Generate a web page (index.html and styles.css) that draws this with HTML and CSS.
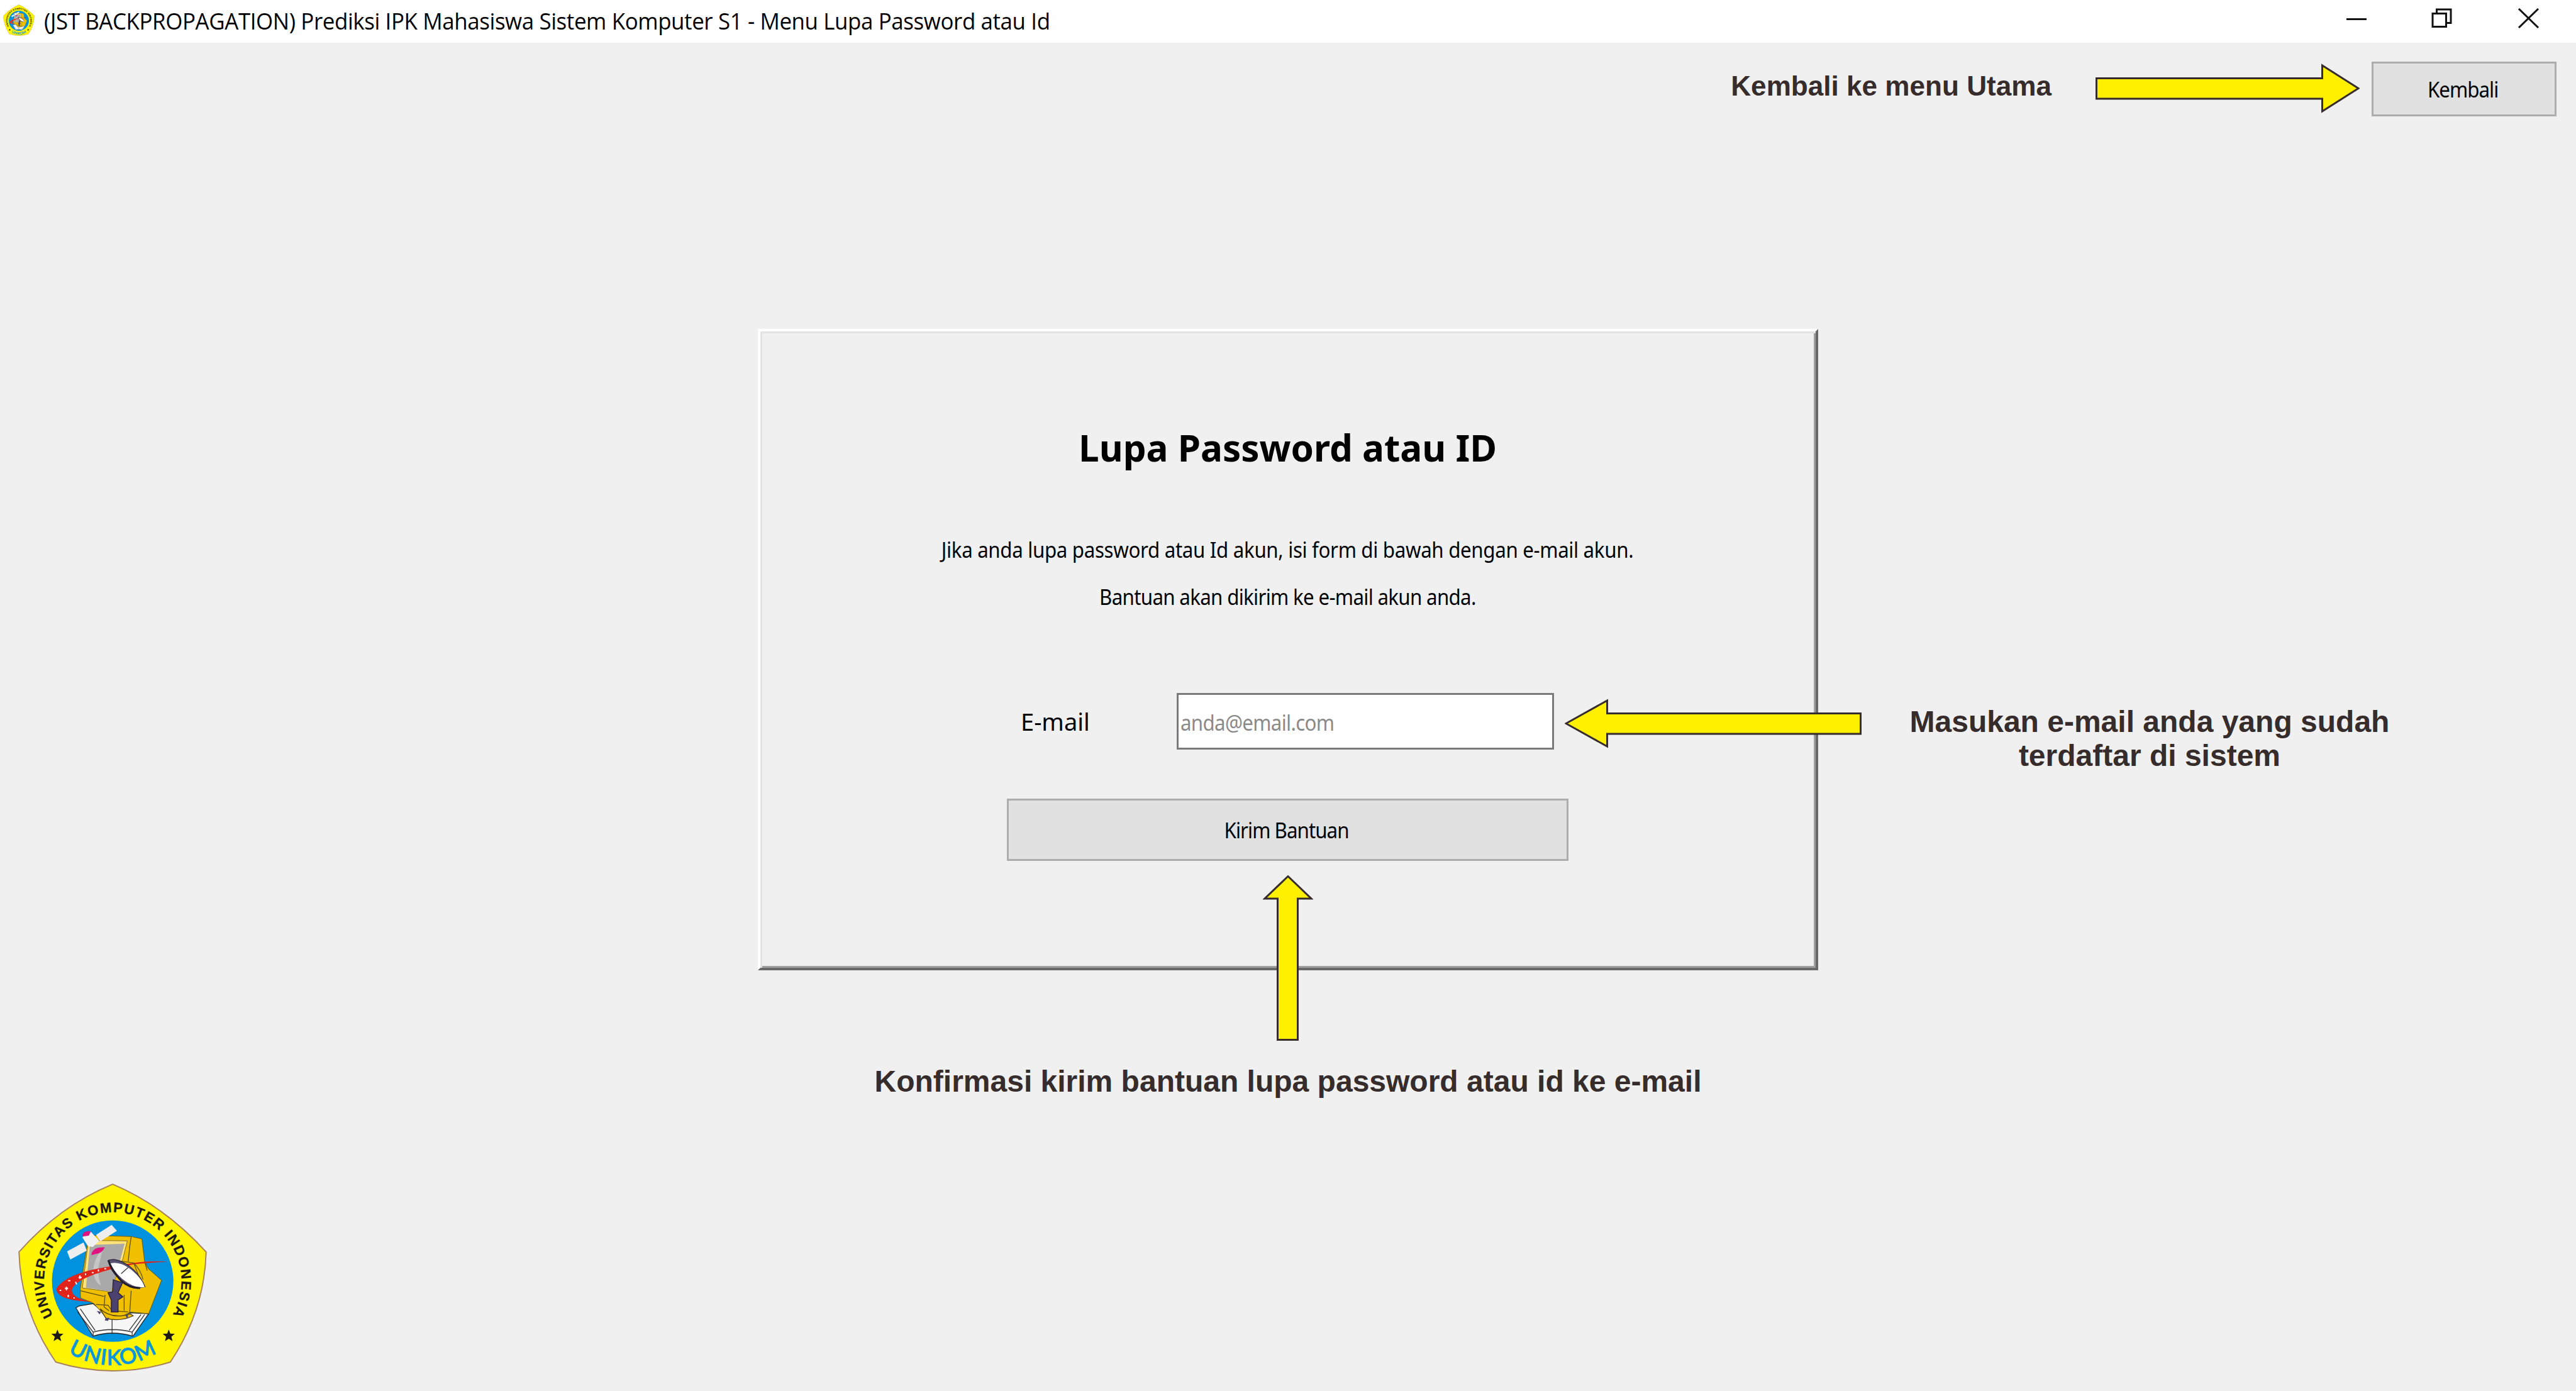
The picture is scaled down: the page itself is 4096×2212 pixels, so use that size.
FILE: index.html
```html
<!DOCTYPE html>
<html lang="id">
<head>
<meta charset="utf-8">
<title>Menu Lupa Password atau Id</title>
<link rel="stylesheet" href="styles.css">
</head>
<body>
<svg class="defs" width="0" height="0" aria-hidden="true">
  <symbol id="logo" viewBox="90 60 945 945">
    <path d="M563 70Q820 178 1028 407Q1020 700 850 955Q563 1042 280 955Q105 700 97 407Q300 178 563 70Z" fill="#fff500" stroke="#a8805c" stroke-width="6"/>
    <circle cx="563" cy="552" r="302" fill="#0092df"/>
    <path d="M380 685L395 676L465 664L560 740L650 710L742 714L664 826Q560 796 465 826Z" fill="#f6f6f6" stroke="#222" stroke-width="4"/>
    <path d="M388 705L466 806Q560 780 660 806L722 718M466 806V826M660 806V826M560 735V816M402 690L476 798M704 718L645 797" fill="none" stroke="#333" stroke-width="4"/>
    <path d="M470 325L655 330L708 342L722 455L740 490L806 548L742 714L650 706L590 740L520 722L470 664L403 636L402 590L440 345Z" fill="#efbf00" stroke="#6b5a14" stroke-width="3"/>
    <path d="M441 362L490 350L636 352L614 440L550 605L412 586Z" fill="#ffe27a" stroke="#7a6b2a" stroke-width="3"/>
    <path d="M450 372L622 366L600 450L556 605L430 584Z" fill="#a9a9a9"/>
    <path d="M515 385Q470 440 466 500Q468 550 505 575Q480 500 500 450Z" fill="#c6c6c6"/>
    <path d="M655 332L648 380L640 455M722 455L735 500M655 600L648 706M525 620L520 680L545 700M403 600L520 628M620 620V700M480 668L540 672L560 700L640 705" fill="none" stroke="#5c4c10" stroke-width="4"/>
    <path d="M838 456Q740 448 640 466L560 478Q330 510 283 590Q285 650 465 655Q360 640 360 596Q375 540 560 492L660 470Q740 460 838 456Z" fill="#e0241c"/>
    <path d="M325 588H341M333 580V598M299 598H307M338 626H346M342 620V632M368 636H374M341 550H353M378 556L384 568M400 524V540M393 534H409M428 514V522M460 510H468M492 494V504M522 490H530" stroke="#fff" stroke-width="6" fill="none"/>
    <path d="M336 404L418 360L434 400L352 445Z" fill="#eee"/>
    <path d="M480 322L558 272L584 302L502 354Z" fill="#eee"/>
    <path d="M412 334L454 306L496 352L464 382L440 378Z" fill="#f1f1f1"/>
    <path d="M412 330Q412 300 455 304L444 326Z" fill="#e0127f"/>
    <path d="M457 423Q460 380 524 384Q508 416 482 416Z" fill="#e0127f"/>
    <path d="M566 545L612 560L590 610L614 630L590 646V706H556V646L540 610L562 606Z" fill="#4c4270" stroke="#221d33" stroke-width="4"/>
    <path d="M500 690Q560 745 650 715L665 725Q600 755 530 738Z" fill="#efbf00" stroke="#4a3b10" stroke-width="4"/>
    <path d="M484 700L505 705L498 718ZM528 735L546 735L540 750L524 748ZM625 720L640 722L636 740Z" fill="#4c4270"/>
    <path d="M560 447L668 462Q705 500 714 545M668 462L690 520" fill="none" stroke="#66571b" stroke-width="4"/>
    <path d="M541 449Q570 435 622 462Q690 500 724 580Q660 596 600 545Q550 500 541 449Z" fill="#5a5174" stroke="#2b2538" stroke-width="4"/>
    <path d="M552 464Q600 452 655 495Q710 540 722 582Q670 590 610 540Q564 500 552 464Z" fill="#fff"/>
    <path d="M541 449Q560 500 605 550Q650 590 700 586" fill="none" stroke="#231e2c" stroke-width="9"/>
    <path d="M640 484L605 515" stroke="#333" stroke-width="4"/>
    <path id="ring-top" d="M267 723A342 342 0 1 1 859 723" fill="none"/>
    <path id="ring-bottom" d="M341 906A418 418 0 0 0 785 906" fill="none"/>
    <text class="logo-ring"><textPath href="#ring-top" textLength="1428">UNIVERSITAS KOMPUTER INDONESIA</textPath></text>
    <text class="logo-name"><textPath href="#ring-bottom" textLength="465">UNIKOM</textPath></text>
    <path id="star" d="M288 793L296 813L318 814L301 829L307 851L288 839L269 851L275 829L258 814L280 813Z" fill="#1c1a10"/>
    <use href="#star" x="554"/>
  </symbol>
</svg>

<header class="titlebar">
  <svg class="app-icon" preserveAspectRatio="none" viewBox="0 0 945 945"><use href="#logo" width="945" height="945"/></svg>
  <span class="window-title">(JST BACKPROPAGATION) Prediksi IPK Mahasiswa Sistem Komputer S1 - Menu Lupa Password atau Id</span>
  <svg class="window-controls" viewBox="0 0 307 32" fill="none" stroke="#111" stroke-width="3">
    <path d="M0 17.5H32"/>
    <path d="M137 8.5H158.500V29.500H137ZM143.500 8.500V2H166V23.500H158.500"/>
    <path d="M274 1L305 31M305 1L274 31"/>
  </svg>
</header>

<main class="client">
  <div class="toolbar">
    <span class="note note-back">Kembali ke menu Utama</span>
    <svg class="arrow-back" viewBox="0 0 420 79"><path d="M1.500 23.500H360.500V3L418 39.500L360.500 76V56H1.500Z"/></svg>
    <button class="button button-back"><span class="narrow tight">Kembali</span></button>
  </div>

  <section class="panel">
    <h1 class="heading">Lupa Password atau ID</h1>
    <p class="intro">
      <span class="narrow loose">Jika anda lupa password atau Id akun, isi form di bawah dengan e-mail akun.</span><br>
      <span class="narrow">Bantuan akan dikirim ke e-mail akun anda.</span>
    </p>
    <div class="form">
      <div class="field">
        <label class="label">E-mail</label>
        <div class="input"><span class="narrow placeholder">anda@email.com</span></div>
      </div>
      <button class="button button-send"><span class="narrow tight">Kirim Bantuan</span></button>
    </div>
    <svg class="arrow-email" viewBox="0 0 472 79"><path d="M470.500 23.500H67.500V3L2 39.500L67.500 76V56H470.500Z"/></svg>
    <p class="note note-email">Masukan e-mail anda yang sudah<br>terdaftar di sistem</p>
    <svg class="arrow-send" viewBox="0 0 80 264"><path d="M23.500 262.500V38H3L40 2.500L77 38H55.500V262.500Z"/></svg>
  </section>

  <p class="note note-send">Konfirmasi kirim bantuan lupa password atau id ke e-mail</p>
  <svg class="logo"><use href="#logo"/></svg>
</main>
</body>
</html>
```
FILE: styles.css
```css
* { box-sizing: border-box; }

body {
  margin: 0;
  width: 4096px;
  height: 2212px;
  overflow: hidden;
  display: flex;
  flex-direction: column;
  background: #f0f0f0;
  color: #000;
  font-family: "Noto Sans", "Open Sans", sans-serif;
  font-size: 34px;
}

h1, p { margin: 0; }
.defs { position: absolute; }

/* condensed interface text */
.narrow {
  display: inline-block;
  white-space: nowrap;
  letter-spacing: -0.75px;
  transform: scaleX(0.92);
}
.narrow.loose { letter-spacing: -0.37px; }
.narrow.tight { letter-spacing: -1.05px; }

.titlebar {
  height: 68px;
  flex: none;
  display: flex;
  align-items: flex-start;
  padding: 0 58px 0 5px;
  background: #fff;
}
.app-icon { width: 50px; height: 50px; margin-top: 7px; }
.window-title {
  margin-left: 15px;
  font-family: "Open Sans", sans-serif;
  font-size: 36.7px;
  line-height: 67px;
  letter-spacing: -0.39px;
  white-space: nowrap;
  transform: scaleX(0.95);
  transform-origin: left;
}
.window-controls { width: 307px; height: 32px; margin: 13px 0 0 auto; }

.client {
  flex: 1;
  display: flex;
  flex-direction: column;
  align-items: center;
}

.toolbar {
  width: 100%;
  height: 87px;
  margin-top: 30px;
  padding-right: 31px;
  display: flex;
  justify-content: flex-end;
  align-items: center;
}
.note {
  font-family: "Liberation Sans", Arial, sans-serif;
  font-weight: bold;
  font-size: 48px;
  color: #362c2c;
  line-height: 53.7px;
  white-space: nowrap;
}
.note-back { font-size: 44.1px; margin: 0 70px 10px 0; }
.arrow-back, .arrow-email, .arrow-send { fill: #fff000; stroke: #362c2c; stroke-width: 3; }
.arrow-back { width: 420px; height: 79px; margin: 0 19px 2px 0; }

.button {
  border: 3px solid #adadad;
  background: #e1e1e1;
  padding: 0 4px 0 0;
  font: inherit;
  color: #000;
}
.button-back { width: 294px; height: 87px; padding-top: 1px; }

.panel {
  position: relative;
  width: 1686px;
  height: 1020px;
  margin: 338px 1px 0 0;
  flex: none;
  padding-top: 142px;
  display: flex;
  flex-direction: column;
  align-items: center;
  border: 4px solid;
  border-color: #fff #696969 #696969 #fff;
  box-shadow: inset 3px 3px #e3e3e3, inset -3px -3px #a0a0a0;
}
.heading { font-size: 58.4px; line-height: 80px; margin-top: 3px; }
.intro { line-height: 74.7px; margin-top: 85px; text-align: center; }
.form { width: 893px; margin-top: 116px; }
.field {
  height: 90px;
  display: flex;
  align-items: center;
  justify-content: space-between;
  padding: 0 23px 0 22px;
}
.label { font-size: 38px; }
.input {
  width: 600px;
  height: 90px;
  border: 3px solid #7a7a7a;
  background: #fff;
  color: #8a8a8a;
  padding-left: 3px;
  line-height: 88px;
}
.placeholder { transform-origin: left; }
.button-send { width: 100%; height: 99px; margin-top: 78px; }

.arrow-email { position: absolute; left: 1279px; top: 584px; width: 472px; height: 79px; }
.arrow-send { position: absolute; left: 799px; top: 864px; width: 80px; height: 264px; }
.note-email { position: absolute; left: 1828px; top: 594px; text-align: center; }

.note-send { margin-top: 150px; }
.logo { width: 302px; height: 302px; margin: auto 0 30px 28px; align-self: flex-start; }
.logo-ring { font: bold 69px "Liberation Sans", sans-serif; fill: #1c1a10; stroke: #1c1a10; stroke-width: 1px; }
.logo-name { font: 106px "Lato", sans-serif; fill: #0a96dc; stroke: #0a96dc; stroke-width: 4px; }
```
